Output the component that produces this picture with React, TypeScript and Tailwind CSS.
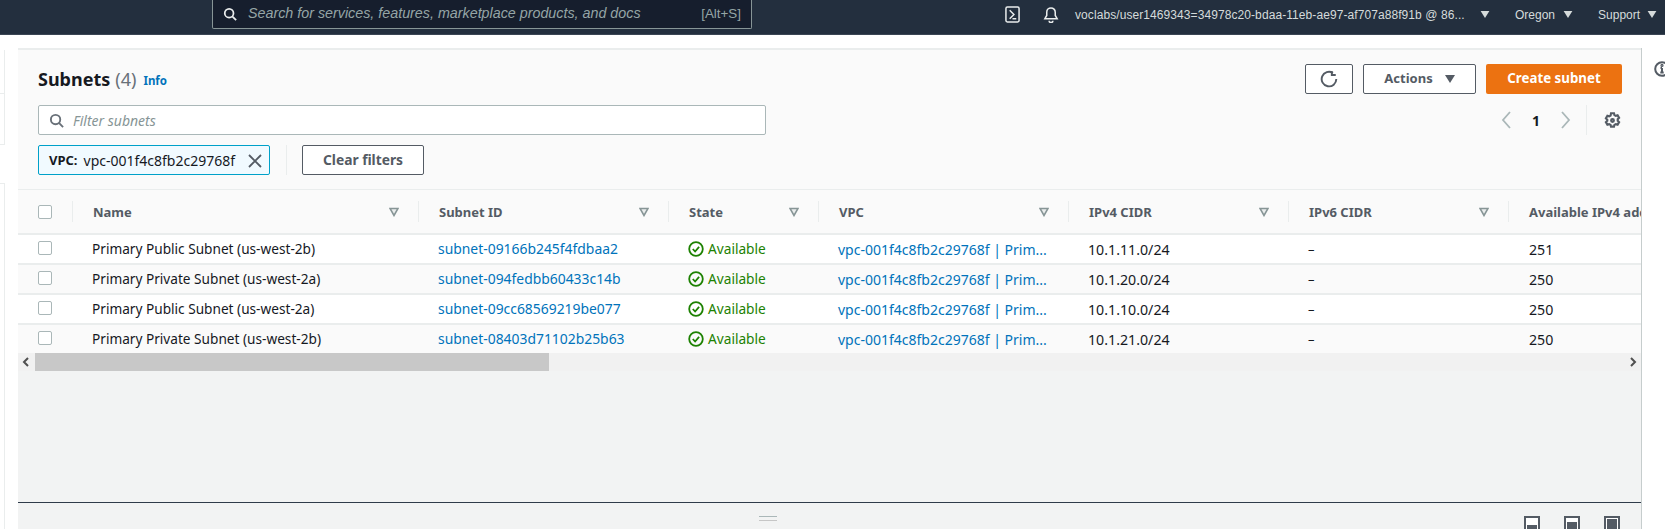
const ROWS = [
  { name: 'Primary Public Subnet (us-west-2b)', id: 'subnet-09166b245f4fdbaa2', cidr: '10.1.11.0/24', free: '251' },
  { name: 'Primary Private Subnet (us-west-2a)', id: 'subnet-094fedbb60433c14b', cidr: '10.1.20.0/24', free: '250' },
  { name: 'Primary Public Subnet (us-west-2a)', id: 'subnet-09cc68569219be077', cidr: '10.1.10.0/24', free: '250' },
  { name: 'Primary Private Subnet (us-west-2b)', id: 'subnet-08403d71102b25b63', cidr: '10.1.21.0/24', free: '250' },
]

const COLS = [
  { label: 'Name', width: 'w-[346px]' },
  { label: 'Subnet ID', width: 'w-[250px]' },
  { label: 'State', width: 'w-[150px]' },
  { label: 'VPC', width: 'w-[250px]' },
  { label: 'IPv4 CIDR', width: 'w-[220px]' },
  { label: 'IPv6 CIDR', width: 'w-[220px]' },
]

function SearchIcon({ className }: { className: string }) {
  return (
    <svg viewBox="0 0 16 16" className={className} fill="none" stroke="currentColor" strokeWidth="2">
      <circle cx="7" cy="7" r="5" />
      <path d="M10.6 10.6 15 15" />
    </svg>
  )
}

function Caret({ className }: { className: string }) {
  return (
    <svg viewBox="0 0 10 8" className={className} fill="currentColor">
      <path d="M0 0h10L5 8z" />
    </svg>
  )
}

function FilterIcon() {
  return (
    <svg viewBox="0 0 10 10" className="h-[10px] w-[10px] shrink-0 text-[#879596]" fill="#eaeded" stroke="currentColor" strokeWidth="1.6">
      <path d="M1 1.5h8L5 8.5z" />
    </svg>
  )
}

function Checkbox() {
  return <div className="h-[14px] w-[14px] rounded-[2px] border border-[#aab7b8] bg-white" />
}

function Chevron({ d }: { d: string }) {
  return (
    <svg viewBox="0 0 12 20" className="h-[20px] w-[12px] text-[#aab7b8]" fill="none" stroke="currentColor" strokeWidth="1.8">
      <path d={d} />
    </svg>
  )
}

function Gear() {
  return (
    <svg viewBox="0 0 16 16" className="h-[17px] w-[17px] text-[#545b64]" fill="none" stroke="currentColor" strokeWidth="2">
      <path d="M6.6 1.2h2.8l.4 1.7 1.3.7 1.7-.5 1.4 2.4-1.3 1.2v1.6l1.3 1.2-1.4 2.4-1.7-.5-1.3.7-.4 1.7H6.6l-.4-1.7-1.3-.7-1.7.5-1.4-2.4 1.3-1.2V7.2L1.8 6l1.4-2.4 1.7.5 1.3-.7z" />
      <circle cx="8" cy="8" r="1.3" />
    </svg>
  )
}

function PanelIcon({ fill }: { fill: string }) {
  return (
    <div className="flex h-[16px] w-[16px] flex-col justify-end border-2 border-[#545b64] bg-white p-[1px]">
      <div className={`bg-[#545b64] ${fill}`} />
    </div>
  )
}

export default function App() {
  return (
    <div className="flex h-[529px] w-[1665px] flex-col overflow-hidden bg-white font-['Noto_Sans',sans-serif] text-[13px] text-[#16191f]">
      {/* Top nav */}
      <header className="flex h-[35px] shrink-0 items-start border-b border-[#3b4654] bg-[#232f3e] font-['Liberation_Sans',sans-serif] text-[12px] text-[#d5dbdb]">
        <div className="ml-[212px] flex h-[29px] w-[540px] items-center rounded-b-[2px] border border-t-0 border-[#879596] bg-[#161e2d] pl-[10px] pr-[10px]">
          <SearchIcon className="h-[14px] w-[14px] text-[#eaeded]" />
          <span className="ml-[11px] flex-1 whitespace-nowrap text-[14.3px] italic text-[#95a5a6]">Search for services, features, marketplace products, and docs</span>
          <span className="text-[13.4px] text-[#95a5a6]">[Alt+S]</span>
        </div>
        <div className="flex h-[29px] flex-1 items-center pl-[253px]">
          <svg viewBox="0 0 16 18" className="h-[17px] w-[15px] text-[#eaeded]" fill="none" stroke="currentColor" strokeWidth="1.6">
            <rect x="1" y="1" width="14" height="16" rx="1.5" />
            <path d="M5 4.5 9.5 9 5 13.5M8 13.5h4" />
          </svg>
          <svg viewBox="0 0 16 18" className="ml-[23px] h-[17px] w-[16px] text-[#eaeded]" fill="none" stroke="currentColor" strokeWidth="1.6">
            <path d="M1.5 13.5h13L12.5 10V6.5a4.5 4.5 0 0 0-9 0V10z" />
            <path d="M6 15.5a2 2 0 0 0 4 0" />
          </svg>
          <span className="ml-[16px] w-[391px] whitespace-nowrap tracking-[0.08px]">voclabs/user1469343=34978c20-bdaa-11eb-ae97-af707a88f91b @ 86...</span>
          <Caret className="ml-[14px] h-[7px] w-[10px]" />
          <span className="ml-[25px]">Oregon</span>
          <Caret className="ml-[8px] h-[7px] w-[10px]" />
          <span className="ml-[25px]">Support</span>
          <Caret className="ml-[7px] h-[7px] w-[10px]" />
        </div>
      </header>

      <div className="flex min-h-0 flex-1 pt-[13px]">
        {/* Collapsed left side */}
        <div className="flex w-[18px] shrink-0 flex-col pt-[2px]">
          <div className="h-[44px] w-[5px] border-r border-b border-[#eaeded]" />
          <div className="h-[51px] w-[5px] border-r border-b border-[#eaeded]" />
          <div className="mt-[38px] h-[347px] w-[5px] border-t border-r border-[#eaeded]" />
        </div>

        {/* Main panel */}
        <main className="flex w-[1624px] shrink-0 flex-col overflow-hidden border-r border-[#c6cdcd] bg-[#f2f3f3]">
          <div className="h-[142px] shrink-0 border-t-2 border-b border-[#eaeded] bg-[#fafafa] pl-[20px] pr-[19px] pt-[14px]">
            <div className="flex h-[30px] items-center">
              <h1 className="text-[18px] font-bold">Subnets</h1>
              <span className="ml-[5px] text-[18px] text-[#687078]">(4)</span>
              <a className="ml-[7px] mt-[3px] text-[11.5px] font-bold text-[#0073bb]">Info</a>
              <div className="ml-auto flex items-center gap-[10px]">
                <button className="flex h-[30px] w-[48px] items-center justify-center rounded-[2px] border border-[#545b64] bg-white text-[#545b64]">
                  <svg viewBox="0 0 16 16" className="h-[18px] w-[18px]" fill="none" stroke="currentColor" strokeWidth="1.7">
                    <path d="M11.5 2.6A6.5 6.5 0 1 0 14.5 8" />
                    <path d="M10.5 1v3.5H14" />
                  </svg>
                </button>
                <button className="flex h-[30px] w-[113px] items-center justify-center gap-[12px] rounded-[2px] border border-[#545b64] bg-white font-bold text-[#545b64]">
                  Actions
                  <Caret className="h-[8px] w-[10px]" />
                </button>
                <button className="h-[30px] w-[136px] rounded-[2px] bg-[#ec7211] text-[13.3px] font-bold text-white">Create subnet</button>
              </div>
            </div>

            <div className="mt-[11px] flex h-[30px] items-center">
              <div className="flex h-[30px] w-[728px] items-center rounded-[2px] border border-[#aab7b8] bg-white pl-[10px]">
                <SearchIcon className="h-[15px] w-[15px] text-[#687078]" />
                <span className="ml-[9px] pt-[1px] text-[14px] italic text-[#879596]">Filter subnets</span>
              </div>
              <div className="ml-auto flex h-[30px] items-center">
                <Chevron d="M10 2 3 10l7 8" />
                <span className="mx-[20px] text-[14px] font-bold">1</span>
                <Chevron d="m2 2 7 8-7 8" />
                <div className="ml-[14px] mr-[17px] h-[30px] w-px bg-[#eaeded]" />
                <Gear />
                <div className="w-[1px]" />
              </div>
            </div>

            <div className="mt-[10px] flex h-[30px] items-center">
              <div className="flex h-[30px] w-[232px] items-center rounded-[2px] border border-[#00a1c9] bg-[#f1faff] pl-[10px] pt-[1px]">
                <span className="font-bold">VPC:</span>
                <span className="ml-[6px] whitespace-nowrap text-[14px]">vpc-001f4c8fb2c29768f</span>
                <svg viewBox="0 0 16 16" className="ml-auto mr-[6px] h-[16px] w-[16px] text-[#545b64]" fill="none" stroke="currentColor" strokeWidth="1.8">
                  <path d="m2 2 12 12M14 2 2 14" />
                </svg>
              </div>
              <div className="ml-[16px] h-[30px] w-px bg-[#eaeded]" />
              <button className="ml-[15px] h-[30px] w-[122px] rounded-[2px] border border-[#545b64] bg-white pt-[1px] text-[13.8px] font-bold text-[#545b64]">Clear filters</button>
            </div>
          </div>

          {/* Table */}
          <div className="flex h-[43px] shrink-0 items-center bg-[#fafafa] pl-[20px]">
            <div className="flex w-[34px] shrink-0 items-center"><Checkbox /></div>
            {COLS.map((col) => (
              <div key={col.label} className={`flex h-[21px] shrink-0 items-center border-l border-[#eaeded] pl-[20px] pr-[19px] ${col.width}`}>
                <span className="flex-1 pt-[2px] font-bold text-[#545b64]">{col.label}</span>
                <FilterIcon />
              </div>
            ))}
            <div className="flex h-[21px] items-center overflow-hidden whitespace-nowrap border-l border-[#eaeded] pl-[20px] pt-[2px] font-bold text-[#545b64]">Available IPv4 addresses</div>
          </div>

          {ROWS.map((row, i) => (
            <div key={row.id} className={`flex h-[30px] shrink-0 items-center border-t-2 border-[#eaeded] pl-[20px] ${i % 2 === 0 ? 'bg-white' : 'bg-[#fafafa]'}`}>
              <div className="mb-[2px] w-[34px] shrink-0"><Checkbox /></div>
              <div className="w-[346px] shrink-0 whitespace-nowrap pl-[20px] pt-[1px] text-[13.65px]">{row.name}</div>
              <a className="w-[250px] shrink-0 pl-[20px] pt-[1px] text-[13.9px] text-[#0073bb]">{row.id}</a>
              <div className="flex w-[150px] shrink-0 items-center pl-[20px] pt-[1px] text-[13.7px] text-[#1d8102]">
                <svg viewBox="0 0 16 16" className="mr-[4px] h-[16px] w-[16px]" fill="none" stroke="currentColor" strokeWidth="1.8">
                  <circle cx="8" cy="8" r="6.8" />
                  <path d="m4.8 8 2.3 2.5 4-4.6" />
                </svg>
                Available
              </div>
              <div className="w-[250px] shrink-0 whitespace-nowrap pl-[20px] pt-[1px] text-[14px] text-[#0073bb]">vpc-001f4c8fb2c29768f | Prim...</div>
              <div className="w-[220px] shrink-0 pl-[20px] pt-[1px] text-[14.2px]">{row.cidr}</div>
              <div className="w-[220px] shrink-0 pl-[20px] pt-[1px]">–</div>
              <div className="pl-[21px] pt-[1px] text-[14.2px]">{row.free}</div>
            </div>
          ))}

          {/* Horizontal scrollbar */}
          <div className="flex h-[18px] shrink-0 items-center bg-[#f1f1f1]">
            <svg viewBox="0 0 17 18" className="h-[18px] w-[17px] text-[#505050]" fill="none" stroke="currentColor" strokeWidth="2">
              <path d="m10 5-4 4 4 4" />
            </svg>
            <div className="h-[18px] w-[514px] bg-[#c8c8c8]" />
            <svg viewBox="0 0 17 18" className="ml-auto h-[18px] w-[17px] text-[#505050]" fill="none" stroke="currentColor" strokeWidth="2">
              <path d="m7 5 4 4-4 4" />
            </svg>
          </div>

          <div className="h-[131px] shrink-0" />

          {/* Split panel */}
          <div className="flex h-[27px] shrink-0 flex-col border-t border-[#2f3b4a]">
            <div className="h-px bg-[#c6cdcd]" />
            <div className="flex flex-1 items-start pt-[13px]">
              <div className="ml-[741px] flex h-[5px] w-[18px] flex-col justify-between">
                <div className="h-px bg-[#aab7b8]" />
                <div className="h-px bg-[#c6c6c6]" />
              </div>
              <div className="ml-auto flex gap-[24px] pr-[21px]">
                <PanelIcon fill="h-[4px]" />
                <PanelIcon fill="h-[7px]" />
                <PanelIcon fill="h-full" />
              </div>
            </div>
          </div>
        </main>

        {/* Tools rail */}
        <div className="flex-1 pl-[12px] pt-[13px]">
          <svg viewBox="0 0 16 16" className="h-[16px] w-[16px] text-[#545b64]" fill="none" stroke="currentColor" strokeWidth="2">
            <circle cx="8" cy="8" r="6.8" />
            <path d="M8 7v4.5M6.3 11.5h3.4M6.5 7H8" />
            <circle cx="8" cy="4.4" r="0.6" />
          </svg>
        </div>
      </div>
    </div>
  )
}
